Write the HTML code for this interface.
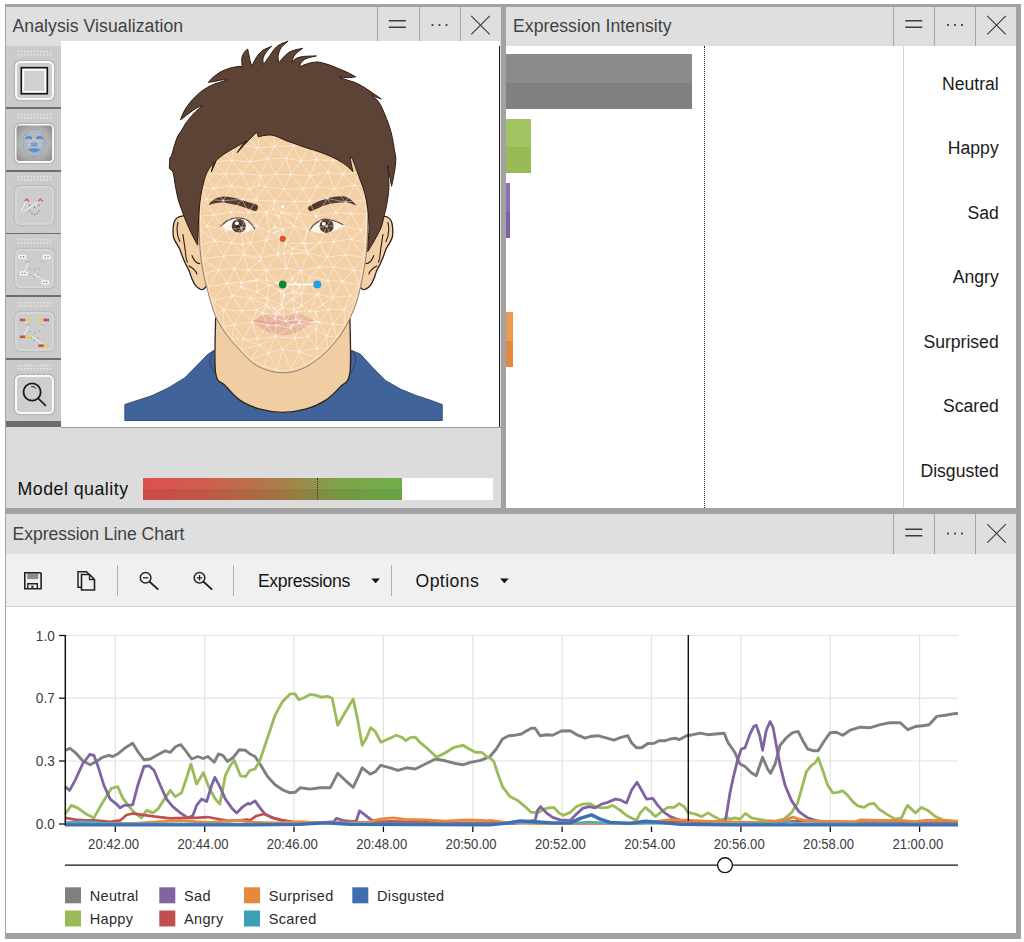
<!DOCTYPE html><html><head><meta charset="utf-8"><title>Expression analysis</title><style>
html,body{margin:0;padding:0;background:#fff;}
body{width:1024px;height:942px;position:relative;overflow:hidden;font-family:"Liberation Sans",sans-serif;color:#1e1e1e;}
.a{position:absolute;}
.t{position:absolute;white-space:nowrap;line-height:1;}
.title{background:#dfdfdf;}
.sep{position:absolute;width:1px;background:#a6a6a6;}
.lab{position:absolute;right:25.3px;white-space:nowrap;font-size:17.6px;line-height:20px;color:#1b1b1b;}
.cell{position:absolute;left:6px;width:55px;height:61px;background:#cbcbcb;}
.grip{position:absolute;width:35.2px;height:6.4px;background-image:radial-gradient(circle,#e6e6e6 0.95px,rgba(230,230,230,0) 1.25px);background-size:3.2px 3.2px;}
.btn{position:absolute;width:35px;height:35px;border:2px solid #f8f8f8;border-radius:5.5px;background:#cecece;box-shadow:0 0 1.5px 0.5px #b0b0b0;}
.btn.dis{border-color:#d6d6d6;background:#cdcdcd;box-shadow:0 0 1px 0.5px #bbb;}
.csep{position:absolute;left:6px;width:55px;height:1.8px;background:#6e6e6e;}
</style></head><body>
<div class="a" style="left:4.5px;top:4px;width:1016.5px;height:935px;background:#a2a2a2;"></div>
<div class="a title" style="left:6px;top:7px;width:495px;height:39px;"></div>
<div class="a" style="left:6px;top:46px;width:495px;height:462px;background:#dcdcdc;"></div>
<div class="t" id="t1" style="left:12.5px;top:18px;font-size:17.6px;letter-spacing:0.08px;color:#424242;">Analysis Visualization</div>
<div class="sep" style="left:377px;top:7px;height:34px;"></div>
<div class="sep" style="left:419px;top:7px;height:34px;"></div>
<div class="sep" style="left:460px;top:7px;height:34px;"></div>
<div class="a title" style="left:506px;top:7px;width:510px;height:39px;"></div>
<div class="a" style="left:506px;top:46px;width:510px;height:462px;background:#fff;"></div>
<div class="t" id="t2" style="left:513px;top:18px;font-size:17.6px;letter-spacing:0.06px;color:#424242;">Expression Intensity</div>
<div class="sep" style="left:893px;top:7px;height:39px;"></div>
<div class="sep" style="left:934px;top:7px;height:39px;"></div>
<div class="sep" style="left:975px;top:7px;height:39px;"></div>
<div class="a title" style="left:6px;top:514px;width:1010px;height:40px;"></div>
<div class="a" style="left:6px;top:554px;width:1010px;height:52px;background:#f0f0f0;"></div>
<div class="a" style="left:6px;top:606px;width:1010px;height:1px;background:#cfcfcf;"></div>
<div class="a" style="left:6px;top:607px;width:1010px;height:326px;background:#fff;"></div>
<div class="t" id="t3" style="left:12.5px;top:525.7px;font-size:17.6px;letter-spacing:-0.06px;color:#424242;">Expression Line Chart</div>
<div class="sep" style="left:893px;top:514px;height:40px;"></div>
<div class="sep" style="left:934px;top:514px;height:40px;"></div>
<div class="sep" style="left:975px;top:514px;height:40px;"></div>
<svg class="a" style="left:0;top:0;" width="1024" height="942" viewBox="0 0 1024 942">
<path d="M388.8 20.8h17M388.8 27.3h17" stroke="#3c3c3c" stroke-width="1.6" fill="none"/><rect x="431.6" y="24.1" width="1.8" height="1.8" fill="#333"/><rect x="438.6" y="24.1" width="1.8" height="1.8" fill="#333"/><rect x="445.6" y="24.1" width="1.8" height="1.8" fill="#333"/><path d="M471.2 15.8l18.5 18.5M489.8 15.8l-18.5 18.5" stroke="#3a3a3a" stroke-width="1.1" fill="none"/>
<path d="M905.3 20.8h17M905.3 27.3h17" stroke="#3c3c3c" stroke-width="1.6" fill="none"/><rect x="947.1" y="24.1" width="1.8" height="1.8" fill="#333"/><rect x="954.1" y="24.1" width="1.8" height="1.8" fill="#333"/><rect x="961.1" y="24.1" width="1.8" height="1.8" fill="#333"/><path d="M987.2 15.8l18.5 18.5M1005.8 15.8l-18.5 18.5" stroke="#3a3a3a" stroke-width="1.1" fill="none"/>
<path d="M905.3 529.3h17M905.3 535.8h17" stroke="#3c3c3c" stroke-width="1.6" fill="none"/><rect x="947.1" y="532.6" width="1.8" height="1.8" fill="#333"/><rect x="954.1" y="532.6" width="1.8" height="1.8" fill="#333"/><rect x="961.1" y="532.6" width="1.8" height="1.8" fill="#333"/><path d="M987.2 524.2l18.5 18.5M1005.8 524.2l-18.5 18.5" stroke="#3a3a3a" stroke-width="1.1" fill="none"/>
</svg>
<div class="a" style="left:6px;top:46.2px;width:55px;height:381px;background:#cbcbcb;"></div>
<div class="grip" style="left:17px;top:49.8px;"></div>
<div class="btn" style="left:15px;top:60.8px;"></div>
<div class="csep" style="top:107.0px;"></div>
<div class="grip" style="left:17px;top:112.5px;"></div>
<div class="btn" style="left:15px;top:123.5px;"></div>
<div class="csep" style="top:169.8px;"></div>
<div class="grip" style="left:17px;top:175.2px;"></div>
<div class="btn dis" style="left:15px;top:186.2px;"></div>
<div class="csep" style="top:232.5px;"></div>
<div class="grip" style="left:17px;top:238.0px;"></div>
<div class="btn dis" style="left:15px;top:249.0px;"></div>
<div class="csep" style="top:295.2px;"></div>
<div class="grip" style="left:17px;top:300.8px;"></div>
<div class="btn dis" style="left:15px;top:311.8px;"></div>
<div class="csep" style="top:358.0px;"></div>
<div class="grip" style="left:17px;top:363.5px;"></div>
<div class="btn" style="left:15px;top:374.5px;"></div>
<div class="a" style="left:6px;top:421.4px;width:55px;height:5.8px;background:#6c6c6c;"></div>
<div class="a" style="left:61px;top:41px;width:439px;height:386px;background:#fff;"></div>
<div class="a" style="left:499px;top:46px;width:1px;height:381px;background:#1a1a1a;"></div>
<div class="a" style="left:61px;top:427px;width:440px;height:1px;background:#9a9a9a;"></div>
<svg class="a" style="left:0;top:0;filter:blur(0.35px);" width="1024" height="942" viewBox="0 0 1024 942">
<defs><clipPath id="fc"><path d="M198.8 216.4 C198.4 209.9 196.9 218.0 197.6 211.4 C198.2 204.7 199.2 186.3 202.6 176.3 C205.9 166.3 210.1 158.3 217.6 151.2 C225.1 144.1 236.4 137.0 247.7 133.7 C258.9 130.4 272.7 130.8 285.3 131.2 C297.8 131.6 312.0 132.4 322.8 136.2 C333.7 140.0 343.7 147.1 350.4 153.7 C357.1 160.4 359.9 166.7 362.9 176.3 C365.9 185.9 367.6 204.7 368.4 211.4 C369.3 218.0 368.2 209.9 367.9 216.4 C367.6 222.8 367.5 240.3 366.7 250.1 C365.8 259.9 364.4 267.2 362.9 275.2 C361.4 283.1 360.0 290.6 357.9 297.7 C355.8 304.8 353.3 311.5 350.4 317.7 C347.5 324.0 344.1 329.8 340.4 335.3 C336.6 340.7 332.4 345.7 327.8 350.3 C323.2 354.9 317.8 359.5 312.8 362.8 C307.8 366.2 302.8 368.7 297.8 370.3 C292.8 372.0 287.8 372.8 282.7 372.8 C277.7 372.8 272.7 372.0 267.7 370.3 C262.7 368.7 257.7 366.6 252.7 362.8 C247.7 359.1 242.2 352.8 237.7 347.8 C233.1 342.8 228.9 338.2 225.1 332.8 C221.4 327.3 217.8 321.5 215.1 315.2 C212.4 309.0 210.7 301.9 208.8 295.2 C207.0 288.5 205.3 282.7 203.8 275.2 C202.4 267.6 200.9 259.9 200.1 250.1 C199.2 240.3 199.2 222.8 198.8 216.4Z"/></clipPath></defs>
<path d="M124.8 420.5 L124.8 404.5 L140.0 399.5 L152.0 395.6 L168.0 388.0 L184.5 378.0 L200.6 361.8 L207.0 355.0 L213.9 350.3 L215.6 372.8 L225.1 385.4 L240.2 400.4 L260.2 409.2 L282.7 412.4 L305.3 409.2 L325.3 400.4 L340.4 386.6 L349.9 372.8 L351.6 350.3 L360.4 354.1 L372.9 367.8 L385.5 380.4 L400.5 389.1 L416.0 395.4 L430.0 400.0 L442.3 404.5 L442.3 420.5Z" fill="#40649a" stroke="#2c3f5e" stroke-width="0.8" stroke-linejoin="round"/>
<path d="M215.6 317.7 C215.6 326.9 214.0 361.6 215.6 372.8 C217.2 384.1 221.0 380.8 225.1 385.4 C229.2 390.0 234.3 396.4 240.2 400.4 C246.0 404.4 253.1 407.2 260.2 409.2 C267.3 411.2 275.2 412.4 282.7 412.4 C290.3 412.4 298.2 411.2 305.3 409.2 C312.4 407.2 319.5 404.2 325.3 400.4 C331.2 396.6 336.3 391.2 340.4 386.6 C344.5 382.0 348.3 384.3 349.9 372.8 C351.5 361.4 349.9 326.9 349.9 317.7" fill="#f1cda3" stroke="#33241a" stroke-width="1.300"/>
<path d="M213.9 350.300C208 358 209 366 215 373" fill="none" stroke="#2c3f5e" stroke-width="0.9"/>
<path d="M351.600 350.300C357.500 358 356.500 366 350.500 373" fill="none" stroke="#2c3f5e" stroke-width="0.9"/>
<path d="M205.0 212.0 C202.0 207.7 193.7 213.3 190.0 214.0 C186.3 214.7 184.7 215.4 182.8 215.9 C180.9 216.4 179.9 216.3 178.6 217.0 C177.3 217.7 175.8 218.6 174.9 220.2 C174.0 221.8 173.6 223.8 173.3 226.5 C173.0 229.2 172.9 233.4 173.3 236.1 C173.7 238.8 174.9 240.3 175.9 242.4 C176.9 244.5 178.5 246.5 179.6 248.8 C180.7 251.1 181.3 253.7 182.3 256.2 C183.3 258.7 184.3 261.2 185.5 263.7 C186.7 266.2 188.1 268.6 189.2 271.1 C190.2 273.6 190.8 276.2 191.8 278.5 C192.8 280.8 193.8 283.2 195.0 284.9 C196.2 286.6 197.9 287.9 199.3 288.6 C200.7 289.3 202.1 290.5 203.5 289.1 C204.9 287.7 207.2 288.2 208.0 280.0 C208.8 271.8 208.5 251.3 208.0 240.0 C207.5 228.7 208.0 216.3 205.0 212.0Z" fill="#f3d0a6" stroke="#2e2016" stroke-width="1.300"/>
<path d="M360.8 212.0 C363.8 207.7 372.1 213.3 375.8 214.0 C379.5 214.7 381.1 215.4 383.0 215.9 C384.9 216.4 385.9 216.3 387.2 217.0 C388.5 217.7 390.0 218.6 390.9 220.2 C391.8 221.8 392.2 223.8 392.5 226.5 C392.8 229.2 392.9 233.4 392.5 236.1 C392.1 238.8 390.9 240.3 389.9 242.4 C388.8 244.5 387.3 246.5 386.2 248.8 C385.1 251.1 384.5 253.7 383.5 256.2 C382.5 258.7 381.4 261.2 380.3 263.7 C379.1 266.2 377.6 268.6 376.6 271.1 C375.5 273.6 375.0 276.2 374.0 278.5 C373.0 280.8 372.0 283.2 370.8 284.9 C369.5 286.6 367.9 287.9 366.5 288.6 C365.1 289.3 363.7 290.5 362.3 289.1 C360.8 287.7 358.5 288.2 357.8 280.0 C357.0 271.8 357.3 251.3 357.8 240.0 C358.3 228.7 357.8 216.3 360.8 212.0Z" fill="#f3d0a6" stroke="#2e2016" stroke-width="1.300"/>
<path d="M182.800 234C184 242 185.500 251 186 257.500C186.500 260 187 261.500 187.600 262.600M191.800 255.200C193.500 260 196.500 263.500 200.300 263.700M188.600 265.800C193 268 196 271 197.100 274.300M178 222C176.500 228 177 236 180 242" fill="none" stroke="#2e2016" stroke-width="1.100"/>
<path d="M383 234C381.800 242 380.300 251 379.800 257.500C379.300 260 378.800 261.500 378.200 262.600M374 255.200C372.300 260 369.300 263.500 365.500 263.700M377.200 265.800C372.800 268 369.800 271 368.700 274.300M387.800 222C389.300 228 388.800 236 385.800 242" fill="none" stroke="#2e2016" stroke-width="1.100"/>
<path d="M198.8 216.4 C198.4 209.9 196.9 218.0 197.6 211.4 C198.2 204.7 199.2 186.3 202.6 176.3 C205.9 166.3 210.1 158.3 217.6 151.2 C225.1 144.1 236.4 137.0 247.7 133.7 C258.9 130.4 272.7 130.8 285.3 131.2 C297.8 131.6 312.0 132.4 322.8 136.2 C333.7 140.0 343.7 147.1 350.4 153.7 C357.1 160.4 359.9 166.7 362.9 176.3 C365.9 185.9 367.6 204.7 368.4 211.4 C369.3 218.0 368.2 209.9 367.9 216.4 C367.6 222.8 367.5 240.3 366.7 250.1 C365.8 259.9 364.4 267.2 362.9 275.2 C361.4 283.1 360.0 290.6 357.9 297.7 C355.8 304.8 353.3 311.5 350.4 317.7 C347.5 324.0 344.1 329.8 340.4 335.3 C336.6 340.7 332.4 345.7 327.8 350.3 C323.2 354.9 317.8 359.5 312.8 362.8 C307.8 366.2 302.8 368.7 297.8 370.3 C292.8 372.0 287.8 372.8 282.7 372.8 C277.7 372.8 272.7 372.0 267.7 370.3 C262.7 368.7 257.7 366.6 252.7 362.8 C247.7 359.1 242.2 352.8 237.7 347.8 C233.1 342.8 228.9 338.2 225.1 332.8 C221.4 327.3 217.8 321.5 215.1 315.2 C212.4 309.0 210.7 301.9 208.8 295.2 C207.0 288.5 205.3 282.7 203.8 275.2 C202.4 267.6 200.9 259.9 200.1 250.1 C199.2 240.3 199.2 222.8 198.8 216.4Z" fill="#f3d0a6" stroke="#8a7460" stroke-width="0.9"/>
<path d="M252.500 320.500C258 318 263 313.500 268 313.800C273 314 278 316.500 282.800 316.500C287.500 316.500 292 314 297.500 313.800C302.500 313.500 308 318 313 320.500C306 328 295 335 282.800 335C270 335 259 328 252.500 320.500Z" fill="#e7b09d" fill-opacity="0.85"/>
<path d="M252.500 320.500C262 322 272 323 282.800 323C293 323 303 322 313 320.500" fill="none" stroke="#d99886" stroke-width="1"/>
<g transform="translate(238.8 226.0)">
<clipPath id="ec238"><path d="M-18.5 0.4 C-17.1 -0.7 -13.3 -4.5 -10.3 -5.9 C-7.3 -7.3 -3.9 -8.2 -0.7 -8.1 C2.5 -8.0 6.1 -7.4 8.9 -5.5 C11.8 -3.6 15.1 1.8 16.4 3.2 C14.7 3.7 9.3 5.7 6.2 6.2 C3.1 6.7 0.8 6.6 -2.0 6.2 C-4.8 5.8 -7.6 5.1 -10.3 4.1 C-13.1 3.1 -17.1 1.0 -18.5 0.4Z"/></clipPath>
<path d="M-18.5 0.4 C-17.1 -0.7 -13.3 -4.5 -10.3 -5.9 C-7.3 -7.3 -3.9 -8.2 -0.7 -8.1 C2.5 -8.0 6.1 -7.4 8.9 -5.5 C11.8 -3.6 15.1 1.8 16.4 3.2 C14.7 3.7 9.3 5.7 6.2 6.2 C3.1 6.7 0.8 6.6 -2.0 6.2 C-4.8 5.8 -7.6 5.1 -10.3 4.1 C-13.1 3.1 -17.1 1.0 -18.5 0.4Z" fill="#fbf7f0"/>
<g clip-path="url(#ec238)"><circle cx="0" cy="0" r="7.100" fill="#5d4034"/><circle cx="0" cy="0.300" r="3.200" fill="#3a251b"/></g>
<circle cx="-2.0" cy="-2.7" r="1.900" fill="#fff"/>
<path d="M-18.5 0.4 C-17.1 -0.7 -13.3 -4.5 -10.3 -5.9 C-7.3 -7.3 -3.9 -8.2 -0.7 -8.1 C2.5 -8.0 6.1 -7.4 8.9 -5.5 C11.8 -3.6 15.1 1.8 16.4 3.2" fill="none" stroke="#6a5346" stroke-width="1.300"/>
</g>
<g transform="translate(326.6 226.0)">
<clipPath id="ec326"><path d="M-17.1 4.8 C-16.3 3.8 -14.7 0.5 -12.3 -1.4 C-9.9 -3.3 -6.1 -6.2 -2.7 -6.8 C0.7 -7.4 4.8 -6.0 8.2 -5.0 C11.6 -4.0 16.2 -1.4 17.8 -0.7 C16.7 -0.0 13.7 2.1 11.0 3.4 C8.3 4.7 4.6 6.2 1.4 6.8 C-1.8 7.4 -5.1 7.1 -8.2 6.8 C-11.3 6.5 -15.6 5.1 -17.1 4.8Z"/></clipPath>
<path d="M-17.1 4.8 C-16.3 3.8 -14.7 0.5 -12.3 -1.4 C-9.9 -3.3 -6.1 -6.2 -2.7 -6.8 C0.7 -7.4 4.8 -6.0 8.2 -5.0 C11.6 -4.0 16.2 -1.4 17.8 -0.7 C16.7 -0.0 13.7 2.1 11.0 3.4 C8.3 4.7 4.6 6.2 1.4 6.8 C-1.8 7.4 -5.1 7.1 -8.2 6.8 C-11.3 6.5 -15.6 5.1 -17.1 4.8Z" fill="#fbf7f0"/>
<g clip-path="url(#ec326)"><circle cx="0" cy="0" r="7.100" fill="#5d4034"/><circle cx="0" cy="0.300" r="3.200" fill="#3a251b"/></g>
<circle cx="-2.7" cy="-2.2" r="1.900" fill="#fff"/>
<path d="M-17.1 4.8 C-16.3 3.8 -14.7 0.5 -12.3 -1.4 C-9.9 -3.3 -6.1 -6.2 -2.7 -6.8 C0.7 -7.4 4.8 -6.0 8.2 -5.0 C11.6 -4.0 16.2 -1.4 17.8 -0.7" fill="none" stroke="#6a5346" stroke-width="1.300"/>
</g>
<path d="M208.6 204.8 C208.6 204.1 212.2 200.4 214.8 199.0 C217.4 197.7 220.7 196.6 224.4 196.6 C228.0 196.5 232.8 197.7 236.7 198.6 C240.6 199.5 244.2 200.9 247.7 202.1 C251.1 203.2 256.2 204.0 257.5 205.5 C258.9 207.0 257.5 210.4 255.9 211.0 C254.2 211.5 250.9 209.6 247.7 208.6 C244.5 207.6 240.6 206.1 236.7 205.1 C232.8 204.1 228.0 203.1 224.4 202.7 C220.7 202.4 217.4 202.8 214.8 203.2 C212.2 203.5 208.6 205.5 208.6 204.8Z" fill="#553a2e"/>
<path d="M308.1 207.5 C308.9 206.1 312.5 204.2 315.6 202.7 C318.7 201.3 322.9 199.7 326.6 198.6 C330.2 197.6 334.1 196.8 337.5 196.6 C341.0 196.3 344.0 195.8 347.1 197.3 C350.2 198.7 355.8 204.2 356.0 205.1 C356.3 206.0 351.6 203.1 348.5 202.7 C345.4 202.4 341.2 202.4 337.5 202.7 C333.9 203.1 330.2 203.7 326.6 204.8 C322.9 205.9 318.3 208.1 315.6 209.2 C312.9 210.3 311.7 211.5 310.4 211.2 C309.2 211.0 307.2 208.9 308.1 207.5Z" fill="#553a2e"/>
<path d="M273 282C276 287 280 288.500 283 288.500C286 288.500 290 287 293 282" fill="none" stroke="#e2b893" stroke-width="1"/>
<g clip-path="url(#fc)"><path d="M250.5 297.9L241.9 310.9M274.0 146.7L286.5 158.0M205.1 273.3L218.2 270.1M285.8 321.3L282.3 307.7M326.7 226.1L343.8 225.5M249.6 189.0L256.1 200.3M326.7 226.1L333.7 241.6M243.5 339.0L257.2 339.0M223.6 327.1L232.0 338.6M233.7 143.6L221.3 150.8M293.3 145.7L300.7 161.2M233.7 143.6L231.8 160.3M343.8 225.5L360.7 230.3M343.8 225.5L351.4 239.1M319.7 242.7L306.9 251.5M223.4 256.1L218.2 270.1M221.3 150.8L212.9 162.0M309.3 284.2L328.2 280.9M329.8 142.4L332.8 160.7M274.9 201.0L273.2 208.7M291.5 369.9L304.9 365.1M223.7 309.6L234.1 325.0M206.0 199.4L223.3 200.6M231.4 242.9L223.4 256.1M275.7 315.0L275.2 318.2M285.7 243.9L302.9 243.0M282.1 349.1L298.8 351.7M304.9 365.1L316.9 357.5M288.5 133.1L293.3 145.7M274.0 146.7L293.3 145.7M243.9 254.8L259.6 261.1M362.0 271.0L354.1 270.2M266.0 304.8L267.8 306.6M232.4 295.7L223.7 309.6M260.3 175.7L265.0 186.8M345.3 255.0L333.2 267.0M273.2 208.7L278.7 215.9M293.3 145.7L309.8 144.1M256.1 200.3L248.6 212.6M309.7 201.3L327.5 198.5M266.7 298.0L257.1 292.1M301.2 293.5L317.8 294.3M266.7 298.0L267.8 306.6M317.0 348.4L315.9 329.2M316.0 321.8L315.9 329.2M328.7 309.2L319.2 321.9M351.4 239.1L345.3 255.0M281.5 304.9L277.4 311.1M327.5 198.5L345.6 202.1M249.6 189.0L259.0 185.1M275.1 336.6L290.7 327.9M299.1 213.6L296.7 218.0M267.4 325.3L275.1 336.6M319.2 267.0L328.2 280.9M359.2 285.0L362.0 271.0M275.7 315.0L262.3 313.1M250.2 161.8L260.3 175.7M230.9 212.1L226.3 230.4M350.5 295.8L344.2 309.5M231.2 185.8L223.3 200.6M267.4 325.3L275.2 318.2M300.0 320.5L296.7 311.7M280.4 291.0L287.3 287.1M316.4 159.8L332.8 160.7M327.2 257.1L333.2 267.0M274.0 146.7L268.2 158.8M326.7 226.1L319.7 242.7M359.2 285.0L342.4 281.3M242.0 173.3L249.6 189.0M316.0 321.8L315.4 311.8M293.3 145.7L286.5 158.0M284.1 296.1L292.9 299.3M292.4 277.8L295.3 282.9M256.8 279.9L257.1 292.1M281.5 304.9L282.3 307.7M274.8 226.7L282.9 229.4M350.9 213.5L343.8 225.5M354.4 185.4L345.6 202.1M260.3 175.7L259.0 185.1M328.2 280.9L310.1 276.8M267.4 325.3L262.3 313.1M342.4 281.3L332.6 297.4M213.9 188.4L206.0 199.4M288.5 133.1L274.0 146.7M295.9 319.5L296.7 311.7M355.8 298.9L359.2 285.0M231.8 160.3L242.0 173.3M309.9 310.8L315.4 311.8M256.5 225.9L269.0 231.7M260.8 257.5L277.9 254.4M309.7 201.3L315.7 216.2M281.5 304.9L280.4 291.0M252.3 321.9L243.5 339.0M302.9 243.0L305.3 243.9M300.7 161.2L316.4 159.8M366.6 214.0L360.7 230.3M274.8 226.7L277.7 231.2M327.7 348.2L326.7 335.9M294.0 309.5L296.7 311.7M267.4 325.3L257.2 339.0M250.2 161.8L242.0 173.3M355.8 298.9L350.5 295.8M278.0 283.0L280.4 291.0M281.6 212.6L299.1 213.6M281.6 212.6L294.2 226.2M256.6 309.8L262.3 313.1M326.7 335.9L319.2 321.9M365.1 199.8L362.9 185.7M327.2 257.1L319.2 267.0M299.1 213.6L315.7 216.2M234.4 268.6L248.5 270.1M299.1 213.6L307.2 230.2M299.2 322.8L300.0 320.5M266.7 298.0L269.0 285.0M362.9 185.7L358.9 172.2M242.0 173.3L231.2 185.8M359.2 285.0L350.5 295.8M290.4 174.5L310.3 176.0M231.4 242.9L242.6 244.5M248.5 270.1L266.3 270.2M328.7 309.2L333.0 323.9M281.5 304.9L292.9 299.3M252.3 321.9L267.4 325.3M309.9 310.8L301.6 305.5M316.9 357.5L298.8 351.7M201.4 244.9L202.9 259.1M310.3 176.0L328.2 172.4M275.1 336.6L259.9 345.0M241.4 227.8L256.5 225.9M241.4 227.8L250.3 242.9M327.7 348.2L317.0 348.4M202.9 259.1L205.1 273.3M276.3 325.6L290.7 327.9M302.7 135.0L288.5 133.1M256.5 225.9L266.2 240.1M291.2 253.7L292.6 248.3M288.5 133.1L274.3 133.4M265.0 186.8L284.3 189.0M250.5 297.9L266.0 304.8M265.0 186.8L274.9 201.0M299.2 322.8L290.7 327.9M227.0 283.1L240.9 282.5M257.2 339.0L275.1 336.6M274.4 233.0L277.7 231.2M231.8 160.3L225.6 174.0M284.3 189.0L302.7 188.9M256.8 279.9L269.0 285.0M277.4 370.4L282.1 349.1M284.3 189.0L294.9 201.6M281.6 212.6L278.7 215.9M275.1 336.6L295.1 338.4M260.8 257.5L266.3 270.2M241.4 349.4L251.5 359.5M366.6 214.0L350.9 213.5M200.3 216.3L214.1 215.0M214.9 240.8L231.4 242.9M200.3 216.3L206.9 226.0M232.0 338.6L243.5 339.0M240.9 282.5L241.1 283.0M205.5 174.3L202.4 188.1M212.2 301.0L223.7 309.6M266.2 240.1L277.9 254.4M302.7 135.0L309.8 144.1M355.8 298.9L344.2 309.5M242.0 199.5L256.1 200.3M250.5 297.9L241.1 287.3M266.7 298.0L274.3 308.4M299.2 322.8L295.9 319.5M202.9 259.1L214.9 240.8M202.9 259.1L223.4 256.1M234.4 268.6L240.9 282.5M294.9 201.6L299.1 213.6M279.8 237.2L277.7 231.2M256.8 279.9L266.8 280.3M212.9 162.0L225.6 174.0M290.4 174.5L302.7 188.9M282.3 307.7L279.5 312.7M358.9 172.2L343.0 174.3M274.8 226.7L274.4 233.0M275.1 336.6L282.1 349.1M358.9 172.2L354.4 185.4M243.9 254.8L248.5 270.1M301.2 293.5L300.0 285.9M352.0 159.7L332.8 160.7M241.4 227.8L231.4 242.9M307.9 336.4L315.9 329.2M317.8 294.3L301.6 305.5M309.3 284.2L304.4 285.3M299.2 322.8L307.9 336.4M317.8 294.3L323.0 304.6M266.3 270.2L266.8 280.3M232.0 338.6L241.4 349.4M260.0 134.4L257.6 147.9M266.3 212.1L256.5 225.9M309.8 144.1L316.4 159.8M265.0 186.8L256.1 200.3M266.7 298.0L281.5 304.9M212.9 162.0L205.5 174.3M274.4 233.0L269.0 231.7M218.2 270.1L227.0 283.1M274.3 308.4L267.8 306.6M277.4 370.4L268.5 352.7M328.2 280.9L342.4 281.3M302.9 243.0L292.6 248.3M360.7 230.3L351.4 239.1M275.5 174.3L284.3 189.0M246.0 136.4L257.6 147.9M292.9 299.3L301.6 305.5M223.3 200.6L242.0 199.5M250.3 242.9L243.9 254.8M292.7 284.5L300.0 285.9M316.9 357.5L327.7 348.2M226.3 230.4L214.9 240.8M266.2 240.1L260.8 257.5M319.7 242.7L333.7 241.6M251.5 359.5L259.9 345.0M274.9 201.0L266.3 212.1M333.2 267.0L342.4 281.3M333.7 241.6L351.4 239.1M315.4 311.8L319.2 321.9M231.8 160.3L250.2 161.8M294.9 201.6L281.6 212.6M208.4 287.2L218.2 270.1M332.6 297.4L350.5 295.8M208.4 287.2L227.0 283.1M246.0 136.4L221.3 150.8M362.0 271.0L364.1 256.8M292.9 299.3L293.7 291.7M240.9 282.5L241.1 287.3M294.0 309.5L295.9 319.5M268.2 158.8L275.5 174.3M214.1 215.0L230.9 212.1M202.4 188.1L213.9 188.4M243.9 254.8L234.4 268.6M291.2 253.7L308.1 253.6M265.0 186.8L259.0 185.1M202.4 188.1L206.0 199.4M269.0 285.0L280.4 291.0M248.5 270.1L259.6 261.1M364.1 256.8L365.4 242.6M286.5 158.0L290.4 174.5M241.9 310.9L252.3 321.9M308.1 253.6L327.2 257.1M299.2 322.8L295.1 338.4M285.8 321.3L276.3 325.6M282.8 291.7L287.3 287.1M364.1 256.8L351.4 239.1M298.8 351.7L317.0 348.4M225.6 174.0L242.0 173.3M315.7 216.2L335.7 212.5M277.9 254.4L283.9 253.6M309.8 144.1L300.7 161.2M315.7 216.2L326.7 226.1M279.8 237.2L274.4 233.0M358.9 172.2L352.0 159.7M335.7 212.5L350.9 213.5M200.3 216.3L200.4 202.2M352.0 159.7L341.9 150.1M317.8 294.3L332.6 297.4M294.0 309.5L282.3 307.7M275.5 174.3L265.0 186.8M294.2 226.2L282.9 229.4M286.5 268.2L300.6 270.9M292.7 284.5L295.3 282.9M223.6 327.1L234.1 325.0M260.8 257.5L259.6 261.1M307.2 230.2L296.7 218.0M279.5 312.7L275.2 318.2M299.2 322.8L316.0 321.8M319.7 242.7L327.2 257.1M208.4 287.2L212.2 301.0M249.6 189.0L242.0 199.5M333.2 267.0L328.2 280.9M294.2 226.2L307.2 230.2M277.9 254.4L279.8 237.2M285.7 243.9L283.9 253.6M343.8 225.5L333.7 241.6M291.5 369.9L298.8 351.7M345.6 202.1L350.9 213.5M221.3 150.8L231.8 160.3M301.2 293.5L296.8 292.9M268.2 158.8L260.3 175.7M287.3 287.1L283.5 294.5M329.8 142.4L316.4 159.8M336.8 337.2L326.7 335.9M310.1 276.8L304.4 285.3M266.3 270.2L286.5 268.2M291.2 253.7L300.6 270.9M206.0 199.4L214.1 215.0M241.9 310.9L234.1 325.0M285.8 321.3L279.5 312.7M260.3 175.7L249.6 189.0M300.6 270.9L310.1 276.8M364.1 256.8L345.3 255.0M315.7 216.2L307.2 230.2M364.1 256.8L354.1 270.2M328.2 172.4L343.0 174.3M344.2 309.5L333.0 323.9M294.0 309.5L292.9 299.3M205.1 273.3L208.4 287.2M327.5 198.5L335.7 212.5M234.1 325.0L243.5 339.0M295.1 338.4L290.7 327.9M274.3 133.4L260.0 134.4M277.9 254.4L286.5 268.2M344.5 325.1L344.2 309.5M274.3 133.4L274.0 146.7M278.0 283.0L287.3 287.1M285.8 321.3L292.1 325.0M251.5 359.5L268.5 352.7M243.9 254.8L242.6 244.5M285.8 321.3L275.2 318.2M200.9 230.6L214.9 240.8M302.7 188.9L317.0 186.7M266.2 240.1L279.8 237.2M302.7 188.9L309.7 201.3M293.7 291.7L287.3 287.1M300.6 270.9L295.3 282.9M319.7 242.7L305.3 243.9M251.5 359.5L263.7 366.7M309.9 310.8L323.0 304.6M291.5 369.9L282.1 349.1M284.1 296.1L293.7 291.7M309.9 310.8L296.7 311.7M275.1 336.6L276.3 325.6M301.2 293.5L292.9 299.3M202.4 188.1L200.4 202.2M309.3 284.2L317.8 294.3M304.9 365.1L298.8 351.7M278.0 283.0L292.4 277.8M275.7 315.0L277.4 311.1M266.3 270.2L278.0 283.0M256.6 309.8L266.0 304.8M285.7 243.9L277.9 254.4M250.5 297.9L266.7 298.0M282.9 229.4L277.7 231.2M336.8 337.2L344.5 325.1M250.3 242.9L242.6 244.5M274.3 308.4L281.5 304.9M292.4 277.8L287.3 287.1M240.9 282.5L256.8 279.9M309.7 201.3L299.1 213.6M319.2 321.9L315.9 329.2M223.4 256.1L243.9 254.8M328.7 309.2L315.4 311.8M365.4 242.6L366.6 214.0M274.8 226.7L269.0 231.7M295.1 338.4L307.9 336.4M327.5 198.5L315.7 216.2M329.8 142.4L309.8 144.1M336.8 337.2L333.0 323.9M223.7 309.6L241.9 310.9M278.0 283.0L269.0 285.0M286.5 268.2L292.4 277.8M277.9 254.4L266.3 270.2M248.6 212.6L266.3 212.1M304.4 285.3L300.0 285.9M295.9 319.5L300.0 320.5M316.4 159.8L328.2 172.4M232.4 295.7L250.5 297.9M200.9 230.6L206.9 226.0M241.4 349.4L243.5 339.0M280.4 291.0L283.5 294.5M291.2 253.7L306.9 251.5M266.2 240.1L274.4 233.0M256.1 200.3L274.9 201.0M365.1 199.8L354.4 185.4M274.3 308.4L275.7 315.0M365.1 199.8L345.6 202.1M284.1 296.1L281.5 304.9M248.5 270.1L256.8 279.9M316.0 321.8L300.0 320.5M256.8 279.9L241.1 283.0M274.8 226.7L278.7 215.9M310.3 176.0L317.0 186.7M216.5 314.6L223.7 309.6M295.1 338.4L298.8 351.7M328.7 309.2L323.0 304.6M250.2 161.8L268.2 158.8M278.0 283.0L266.8 280.3M262.3 313.1L267.8 306.6M205.5 174.3L225.6 174.0M256.5 225.9L250.3 242.9M326.7 335.9L315.9 329.2M316.0 321.8L319.2 321.9M266.7 298.0L266.0 304.8M284.3 189.0L274.9 201.0M233.7 143.6L250.2 161.8M309.9 310.8L300.0 320.5M296.8 292.9L293.7 291.7M365.4 242.6L366.0 228.3M300.7 161.2L310.3 176.0M214.9 240.8L223.4 256.1M269.0 285.0L257.1 292.1M302.7 135.0L293.3 145.7M268.5 352.7L259.9 345.0M231.4 242.9L243.9 254.8M327.7 348.2L336.8 337.2M333.0 323.9L326.7 335.9M282.9 229.4L278.7 215.9M242.0 199.5L248.6 212.6M304.4 285.3L295.3 282.9M250.5 297.9L257.1 292.1M234.4 268.6L227.0 283.1M232.4 295.7L241.9 310.9M202.9 259.1L218.2 270.1M299.2 322.8L315.9 329.2M256.1 200.3L266.3 212.1M290.4 174.5L284.3 189.0M281.6 212.6L273.2 208.7M281.6 212.6L296.7 218.0M275.1 336.6L268.5 352.7M248.5 270.1L240.9 282.5M214.1 215.0L226.3 230.4M302.9 243.0L306.9 251.5M310.3 176.0L302.7 188.9M241.1 287.3L241.1 283.0M352.0 159.7L343.0 174.3M295.1 338.4L282.1 349.1M230.9 212.1L248.6 212.6M301.6 305.5L296.7 311.7M341.9 150.1L332.8 160.7M230.9 212.1L241.4 227.8M286.5 268.2L283.9 253.6M205.5 174.3L213.9 188.4M280.4 291.0L282.8 291.7M354.1 270.2L342.4 281.3M327.2 257.1L345.3 255.0M292.1 325.0L290.7 327.9M266.3 270.2L259.6 261.1M227.0 283.1L232.4 295.7M359.2 285.0L354.1 270.2M242.0 173.3L260.3 175.7M285.7 243.9L282.9 229.4M335.7 212.5L343.8 225.5M328.7 309.2L344.2 309.5M256.8 279.9L241.1 287.3M350.9 213.5L360.7 230.3M223.3 200.6L230.9 212.1M300.7 161.2L290.4 174.5M252.3 321.9L262.3 313.1M341.9 150.1L329.8 142.4M256.1 200.3L259.0 185.1M256.6 309.8L252.3 321.9M268.5 352.7L282.1 349.1M300.6 270.9L319.2 267.0M365.4 242.6L360.7 230.3M365.4 242.6L351.4 239.1M342.4 281.3L350.5 295.8M291.2 253.7L283.9 253.6M213.9 188.4L231.2 185.8M213.9 188.4L223.3 200.6M294.2 226.2L302.9 243.0M292.1 325.0L295.9 319.5M242.0 199.5L230.9 212.1M333.7 241.6L345.3 255.0M212.2 301.0L216.5 314.6M307.2 230.2L326.7 226.1M307.2 230.2L319.7 242.7M366.0 228.3L360.7 230.3M332.6 297.4L344.2 309.5M246.0 136.4L233.7 143.6M252.3 321.9L257.2 339.0M214.1 215.0L206.9 226.0M232.0 338.6L234.1 325.0M212.2 301.0L227.0 283.1M286.5 158.0L275.5 174.3M334.4 189.0L354.4 185.4M276.3 325.6L275.2 318.2M262.3 313.1L275.2 318.2M334.4 189.0L345.6 202.1M200.4 202.2L206.0 199.4M309.3 284.2L310.1 276.8M308.1 253.6L319.2 267.0M200.4 202.2L214.1 215.0M299.2 322.8L292.1 325.0M225.6 174.0L231.2 185.8M285.7 243.9L279.8 237.2M266.7 298.0L280.4 291.0M212.9 162.0L231.8 160.3M335.7 212.5L326.7 226.1M257.2 339.0L259.9 345.0M328.2 280.9L332.6 297.4M316.9 357.5L317.0 348.4M282.3 307.7L277.4 311.1M223.3 200.6L214.1 215.0M343.0 174.3L354.4 185.4M319.7 242.7L308.1 253.6M319.2 267.0L310.1 276.8M260.0 134.4L246.0 136.4M257.6 147.9L268.2 158.8M294.2 226.2L285.7 243.9M333.7 241.6L327.2 257.1M241.4 227.8L242.6 244.5M243.5 339.0L259.9 345.0M317.0 186.7L334.4 189.0M300.0 285.9L295.3 282.9M317.0 186.7L327.5 198.5M307.2 230.2L302.9 243.0M345.6 202.1L335.7 212.5M263.7 366.7L277.4 370.4M332.6 297.4L328.7 309.2M250.3 242.9L266.2 240.1M294.0 309.5L301.6 305.5M266.3 212.1L269.0 231.7M301.2 293.5L304.4 285.3M307.2 230.2L305.3 243.9M291.2 253.7L286.5 268.2M277.4 370.4L291.5 369.9M262.3 313.1L266.0 304.8M292.7 284.5L287.3 287.1M212.2 301.0L232.4 295.7M334.4 189.0L327.5 198.5M332.8 160.7L343.0 174.3M201.4 244.9L214.9 240.8M308.1 253.6L300.6 270.9M257.6 147.9L274.0 146.7M274.9 201.0L294.9 201.6M225.6 174.0L213.9 188.4M282.8 291.7L283.5 294.5M344.5 325.1L350.8 312.3M309.9 310.8L316.0 321.8M294.9 201.6L309.7 201.3M266.2 240.1L269.0 231.7M315.4 311.8L323.0 304.6M328.2 172.4L334.4 189.0M292.9 299.3L296.8 292.9M307.9 336.4L317.0 348.4M350.8 312.3L355.8 298.9M268.2 158.8L286.5 158.0M328.2 280.9L317.8 294.3M292.9 299.3L282.3 307.7M284.1 296.1L283.5 294.5M317.8 294.3L309.9 310.8M241.1 287.3L257.1 292.1M243.9 254.8L260.8 257.5M292.7 284.5L292.4 277.8M266.3 212.1L278.7 215.9M294.2 226.2L278.7 215.9M301.2 293.5L301.6 305.5M286.5 268.2L278.0 283.0M286.5 158.0L300.7 161.2M292.6 248.3L306.9 251.5M275.7 315.0L267.8 306.6M248.6 212.6L256.5 225.9M241.9 310.9L256.6 309.8M343.0 174.3L334.4 189.0M326.7 335.9L317.0 348.4M366.0 228.3L366.6 214.0M279.5 312.7L277.4 311.1M257.6 147.9L250.2 161.8M350.8 312.3L344.2 309.5M260.0 134.4L274.0 146.7M266.3 212.1L274.8 226.7M302.7 188.9L294.9 201.6M266.8 280.3L269.0 285.0M263.7 366.7L268.5 352.7M366.6 214.0L365.1 199.8M285.7 243.9L292.6 248.3M232.4 295.7L241.1 287.3M365.1 199.8L350.9 213.5M218.2 270.1L234.4 268.6M279.8 237.2L282.9 229.4M317.0 186.7L309.7 201.3M275.5 174.3L290.4 174.5M309.3 284.2L301.2 293.5M234.1 325.0L252.3 321.9M250.3 242.9L260.8 257.5M200.9 230.6L201.4 244.9M266.3 270.2L256.8 279.9M226.3 230.4L241.4 227.8M226.3 230.4L231.4 242.9M332.8 160.7L328.2 172.4M250.5 297.9L256.6 309.8M285.8 321.3L290.7 327.9M333.2 267.0L354.1 270.2M274.9 201.0L281.6 212.6M227.0 283.1L241.1 287.3M328.2 172.4L317.0 186.7M223.4 256.1L234.4 268.6M274.3 308.4L277.4 311.1M307.9 336.4L298.8 351.7M305.3 243.9L306.9 251.5M281.5 304.9L283.5 294.5M332.6 297.4L323.0 304.6M292.7 284.5L293.7 291.7M267.4 325.3L276.3 325.6M316.9 136.9L309.8 144.1M248.6 212.6L241.4 227.8M344.5 325.1L333.0 323.9M283.9 253.6L292.6 248.3M316.4 159.8L310.3 176.0M260.3 175.7L275.5 174.3M300.6 270.9L292.4 277.8M285.8 321.3L295.9 319.5M333.0 323.9L319.2 321.9M300.6 270.9L304.4 285.3M345.3 255.0L354.1 270.2M293.7 291.7L300.0 285.9M200.3 216.3L200.9 230.6M241.4 349.4L259.9 345.0M233.7 143.6L257.6 147.9M293.7 291.7L283.5 294.5M206.9 226.0L226.3 230.4M308.1 253.6L306.9 251.5M294.0 309.5L285.8 321.3M206.9 226.0L214.9 240.8M362.9 185.7L354.4 185.4M329.8 142.4L316.9 136.9M296.8 292.9L300.0 285.9M319.2 267.0L333.2 267.0M266.3 212.1L273.2 208.7M294.2 226.2L296.7 218.0M316.9 136.9L302.7 135.0M275.7 315.0L279.5 312.7M231.2 185.8L249.6 189.0M223.6 327.1L223.7 309.6M231.2 185.8L242.0 199.5M216.5 314.6L223.6 327.1" fill="none" stroke="#fff" stroke-opacity="0.44" stroke-width="1"/>
<g fill="#fff" fill-opacity="0.4"><circle cx="257.6" cy="147.9" r="1.3"/><circle cx="274.0" cy="146.7" r="1.3"/><circle cx="293.3" cy="145.7" r="1.3"/><circle cx="309.8" cy="144.1" r="1.3"/><circle cx="231.8" cy="160.3" r="1.3"/><circle cx="250.2" cy="161.8" r="1.3"/><circle cx="268.2" cy="158.8" r="1.3"/><circle cx="286.5" cy="158.0" r="1.3"/><circle cx="300.7" cy="161.2" r="1.3"/><circle cx="316.4" cy="159.8" r="1.3"/><circle cx="332.8" cy="160.7" r="1.3"/><circle cx="225.6" cy="174.0" r="1.3"/><circle cx="242.0" cy="173.3" r="1.3"/><circle cx="260.3" cy="175.7" r="1.3"/><circle cx="275.5" cy="174.3" r="1.3"/><circle cx="290.4" cy="174.5" r="1.3"/><circle cx="310.3" cy="176.0" r="1.3"/><circle cx="328.2" cy="172.4" r="1.3"/><circle cx="343.0" cy="174.3" r="1.3"/><circle cx="213.9" cy="188.4" r="1.3"/><circle cx="231.2" cy="185.8" r="1.3"/><circle cx="249.6" cy="189.0" r="1.3"/><circle cx="265.0" cy="186.8" r="1.3"/><circle cx="284.3" cy="189.0" r="1.3"/><circle cx="302.7" cy="188.9" r="1.3"/><circle cx="317.0" cy="186.7" r="1.3"/><circle cx="334.4" cy="189.0" r="1.3"/><circle cx="354.4" cy="185.4" r="1.3"/><circle cx="206.0" cy="199.4" r="1.3"/><circle cx="223.3" cy="200.6" r="1.3"/><circle cx="242.0" cy="199.5" r="1.3"/><circle cx="256.1" cy="200.3" r="1.3"/><circle cx="274.9" cy="201.0" r="1.3"/><circle cx="294.9" cy="201.6" r="1.3"/><circle cx="309.7" cy="201.3" r="1.3"/><circle cx="327.5" cy="198.5" r="1.3"/><circle cx="345.6" cy="202.1" r="1.3"/><circle cx="214.1" cy="215.0" r="1.3"/><circle cx="230.9" cy="212.1" r="1.3"/><circle cx="248.6" cy="212.6" r="1.3"/><circle cx="266.3" cy="212.1" r="1.3"/><circle cx="281.6" cy="212.6" r="1.3"/><circle cx="299.1" cy="213.6" r="1.3"/><circle cx="315.7" cy="216.2" r="1.3"/><circle cx="335.7" cy="212.5" r="1.3"/><circle cx="350.9" cy="213.5" r="1.3"/><circle cx="206.9" cy="226.0" r="1.3"/><circle cx="226.3" cy="230.4" r="1.3"/><circle cx="241.4" cy="227.8" r="1.3"/><circle cx="256.5" cy="225.9" r="1.3"/><circle cx="274.8" cy="226.7" r="1.3"/><circle cx="294.2" cy="226.2" r="1.3"/><circle cx="307.2" cy="230.2" r="1.3"/><circle cx="326.7" cy="226.1" r="1.3"/><circle cx="343.8" cy="225.5" r="1.3"/><circle cx="360.7" cy="230.3" r="1.3"/><circle cx="214.9" cy="240.8" r="1.3"/><circle cx="231.4" cy="242.9" r="1.3"/><circle cx="250.3" cy="242.9" r="1.3"/><circle cx="266.2" cy="240.1" r="1.3"/><circle cx="285.7" cy="243.9" r="1.3"/><circle cx="302.9" cy="243.0" r="1.3"/><circle cx="319.7" cy="242.7" r="1.3"/><circle cx="333.7" cy="241.6" r="1.3"/><circle cx="351.4" cy="239.1" r="1.3"/><circle cx="223.4" cy="256.1" r="1.3"/><circle cx="243.9" cy="254.8" r="1.3"/><circle cx="260.8" cy="257.5" r="1.3"/><circle cx="277.9" cy="254.4" r="1.3"/><circle cx="291.2" cy="253.7" r="1.3"/><circle cx="308.1" cy="253.6" r="1.3"/><circle cx="327.2" cy="257.1" r="1.3"/><circle cx="345.3" cy="255.0" r="1.3"/><circle cx="218.2" cy="270.1" r="1.3"/><circle cx="234.4" cy="268.6" r="1.3"/><circle cx="248.5" cy="270.1" r="1.3"/><circle cx="266.3" cy="270.2" r="1.3"/><circle cx="286.5" cy="268.2" r="1.3"/><circle cx="300.6" cy="270.9" r="1.3"/><circle cx="319.2" cy="267.0" r="1.3"/><circle cx="333.2" cy="267.0" r="1.3"/><circle cx="354.1" cy="270.2" r="1.3"/><circle cx="227.0" cy="283.1" r="1.3"/><circle cx="240.9" cy="282.5" r="1.3"/><circle cx="256.8" cy="279.9" r="1.3"/><circle cx="278.0" cy="283.0" r="1.3"/><circle cx="292.7" cy="284.5" r="1.3"/><circle cx="309.3" cy="284.2" r="1.3"/><circle cx="328.2" cy="280.9" r="1.3"/><circle cx="342.4" cy="281.3" r="1.3"/><circle cx="232.4" cy="295.7" r="1.3"/><circle cx="250.5" cy="297.9" r="1.3"/><circle cx="266.7" cy="298.0" r="1.3"/><circle cx="284.1" cy="296.1" r="1.3"/><circle cx="301.2" cy="293.5" r="1.3"/><circle cx="317.8" cy="294.3" r="1.3"/><circle cx="332.6" cy="297.4" r="1.3"/><circle cx="350.5" cy="295.8" r="1.3"/><circle cx="223.7" cy="309.6" r="1.3"/><circle cx="241.9" cy="310.9" r="1.3"/><circle cx="256.6" cy="309.8" r="1.3"/><circle cx="274.3" cy="308.4" r="1.3"/><circle cx="294.0" cy="309.5" r="1.3"/><circle cx="309.9" cy="310.8" r="1.3"/><circle cx="328.7" cy="309.2" r="1.3"/><circle cx="344.2" cy="309.5" r="1.3"/><circle cx="234.1" cy="325.0" r="1.3"/><circle cx="252.3" cy="321.9" r="1.3"/><circle cx="267.4" cy="325.3" r="1.3"/><circle cx="285.8" cy="321.3" r="1.3"/><circle cx="299.2" cy="322.8" r="1.3"/><circle cx="316.0" cy="321.8" r="1.3"/><circle cx="333.0" cy="323.9" r="1.3"/><circle cx="243.5" cy="339.0" r="1.3"/><circle cx="257.2" cy="339.0" r="1.3"/><circle cx="275.1" cy="336.6" r="1.3"/><circle cx="295.1" cy="338.4" r="1.3"/><circle cx="307.9" cy="336.4" r="1.3"/><circle cx="326.7" cy="335.9" r="1.3"/><circle cx="268.5" cy="352.7" r="1.3"/><circle cx="282.1" cy="349.1" r="1.3"/><circle cx="298.8" cy="351.7" r="1.3"/><circle cx="317.0" cy="348.4" r="1.3"/><circle cx="281.5" cy="304.9" r="1.3"/><circle cx="266.8" cy="280.3" r="1.3"/><circle cx="292.9" cy="299.3" r="1.3"/><circle cx="296.8" cy="292.9" r="1.3"/><circle cx="275.7" cy="315.0" r="1.3"/><circle cx="283.9" cy="253.6" r="1.3"/><circle cx="269.0" cy="285.0" r="1.3"/><circle cx="280.4" cy="291.0" r="1.3"/><circle cx="282.8" cy="291.7" r="1.3"/><circle cx="279.8" cy="237.2" r="1.3"/><circle cx="292.1" cy="325.0" r="1.3"/><circle cx="292.4" cy="277.8" r="1.3"/><circle cx="292.6" cy="248.3" r="1.3"/><circle cx="241.1" cy="287.3" r="1.3"/><circle cx="262.3" cy="313.1" r="1.3"/><circle cx="259.0" cy="185.1" r="1.3"/><circle cx="259.9" cy="345.0" r="1.3"/><circle cx="274.4" cy="233.0" r="1.3"/><circle cx="266.0" cy="304.8" r="1.3"/><circle cx="293.7" cy="291.7" r="1.3"/><circle cx="315.4" cy="311.8" r="1.3"/><circle cx="282.3" cy="307.7" r="1.3"/><circle cx="319.2" cy="321.9" r="1.3"/><circle cx="305.3" cy="243.9" r="1.3"/><circle cx="279.5" cy="312.7" r="1.3"/><circle cx="276.3" cy="325.6" r="1.3"/><circle cx="295.9" cy="319.5" r="1.3"/><circle cx="310.1" cy="276.8" r="1.3"/><circle cx="275.2" cy="318.2" r="1.3"/><circle cx="304.4" cy="285.3" r="1.3"/><circle cx="257.1" cy="292.1" r="1.3"/><circle cx="290.7" cy="327.9" r="1.3"/><circle cx="300.0" cy="285.9" r="1.3"/><circle cx="301.6" cy="305.5" r="1.3"/><circle cx="287.3" cy="287.1" r="1.3"/><circle cx="277.4" cy="311.1" r="1.3"/><circle cx="259.6" cy="261.1" r="1.3"/><circle cx="282.9" cy="229.4" r="1.3"/><circle cx="273.2" cy="208.7" r="1.3"/><circle cx="267.8" cy="306.6" r="1.3"/><circle cx="295.3" cy="282.9" r="1.3"/><circle cx="277.7" cy="231.2" r="1.3"/><circle cx="323.0" cy="304.6" r="1.3"/><circle cx="306.9" cy="251.5" r="1.3"/><circle cx="278.7" cy="215.9" r="1.3"/><circle cx="300.0" cy="320.5" r="1.3"/><circle cx="241.1" cy="283.0" r="1.3"/><circle cx="296.7" cy="218.0" r="1.3"/><circle cx="242.6" cy="244.5" r="1.3"/><circle cx="269.0" cy="231.7" r="1.3"/><circle cx="283.5" cy="294.5" r="1.3"/><circle cx="296.7" cy="311.7" r="1.3"/><circle cx="315.9" cy="329.2" r="1.3"/></g></g>
<path d="M197.7 245.2 C196.6 243.3 193.4 237.6 191.5 233.6 C189.6 229.6 187.6 225.1 186.0 221.2 C184.4 217.4 183.3 214.2 181.9 210.3 C180.5 206.4 178.9 202.3 177.8 197.9 C176.7 193.6 175.9 188.5 175.1 184.2 C174.3 180.0 174.0 175.3 173.0 172.6 C172.1 170.0 169.9 169.1 169.3 168.4 C169.4 166.7 169.5 160.4 169.9 158.2 C170.3 156.0 170.9 157.3 171.6 155.2 C172.4 153.1 173.4 148.8 174.4 145.6 C175.4 142.4 176.6 138.6 177.8 136.0 C179.1 133.4 180.7 131.9 181.9 130.0 C183.1 128.1 183.7 126.5 184.9 124.6 C186.1 122.7 187.6 120.8 189.3 118.7 C191.0 116.6 193.3 114.0 195.3 112.0 C197.3 110.0 200.0 107.8 201.2 106.7 C202.4 105.6 202.4 105.7 202.7 105.5 C201.6 106.0 198.3 106.9 196.0 108.3 C193.7 109.7 191.2 111.8 188.6 113.7 C186.0 115.6 181.8 118.8 180.4 119.8 C181.0 118.4 182.4 114.3 184.1 111.3 C185.8 108.3 188.2 104.7 190.8 101.6 C193.4 98.5 197.0 95.0 199.7 92.7 C202.4 90.4 204.7 89.1 207.2 87.6 C209.7 86.1 212.1 84.9 214.6 83.9 C217.1 82.9 219.9 82.3 222.0 81.7 C224.1 81.1 226.2 80.4 227.1 80.1 C226.2 80.1 224.1 79.7 222.0 79.9 C219.9 80.1 216.9 81.0 214.6 81.4 C212.3 81.8 209.4 82.2 208.3 82.4 C209.1 81.5 211.1 78.9 213.1 77.2 C215.1 75.5 217.8 73.5 220.5 72.0 C223.2 70.5 226.2 69.2 229.4 68.3 C232.7 67.3 237.9 66.5 240.0 66.3 C242.1 66.1 241.8 67.1 242.2 67.2 C242.1 65.7 241.6 60.4 241.9 57.9 C242.3 55.5 243.3 53.9 244.2 52.4 C245.2 51.0 247.1 49.6 247.7 49.0 C247.9 50.0 248.6 53.0 249.0 55.2 C249.5 57.3 249.9 60.3 250.4 62.0 C250.9 63.7 251.8 64.9 252.1 65.5 C252.5 64.7 253.5 62.4 254.5 60.7 C255.5 58.9 256.6 56.9 257.9 55.2 C259.3 53.5 260.5 51.9 262.7 50.4 C265.0 48.9 270.2 47.0 271.6 46.3 C270.7 47.3 267.6 50.1 266.2 52.2 C264.7 54.2 263.5 56.5 263.0 58.6 C262.6 60.7 263.4 63.5 263.4 64.5 C264.2 63.4 266.3 60.6 268.2 57.9 C270.2 55.2 273.0 50.6 275.1 48.3 C277.1 46.0 278.4 45.4 280.5 44.2 C282.7 43.0 286.8 41.7 288.1 41.2 C286.9 42.3 282.9 45.2 281.2 47.6 C279.6 50.1 278.5 53.4 278.1 55.9 C277.7 58.4 278.8 61.6 278.9 62.7 C280.0 61.5 283.2 57.2 285.5 55.2 C287.7 53.2 289.5 51.9 292.3 50.8 C295.2 49.7 300.9 48.7 302.6 48.3 C301.5 49.2 297.4 52.1 295.8 53.8 C294.2 55.5 293.6 57.2 293.0 58.6 C292.4 60.0 292.2 61.7 292.1 62.3 C292.7 61.7 293.9 59.6 295.8 58.6 C297.6 57.6 299.9 57.0 303.3 56.5 C306.7 56.1 314.1 56.0 316.3 55.9 C314.6 56.3 308.5 57.5 306.0 58.6 C303.5 59.7 302.3 61.3 301.2 62.7 C300.1 64.1 299.7 66.1 299.5 66.8 C300.8 66.3 304.5 64.5 307.4 63.7 C310.3 62.9 313.8 62.0 317.0 62.0 C320.2 62.1 323.2 63.1 326.6 64.1 C330.0 65.1 334.1 66.8 337.5 68.2 C341.0 69.6 344.1 70.9 347.1 72.3 C350.1 73.7 354.2 76.1 355.6 76.8 C354.4 77.0 351.2 77.6 348.5 77.6 C345.8 77.7 340.7 77.2 339.2 77.1 C340.3 77.5 342.8 78.5 345.8 79.6 C348.7 80.6 353.3 81.7 356.7 83.3 C360.1 84.8 363.1 86.8 366.3 88.7 C369.5 90.7 373.4 93.5 375.9 95.2 C378.4 96.9 380.5 98.4 381.4 99.0 C380.5 98.7 377.5 97.7 375.9 97.0 C374.2 96.2 372.2 95.0 371.5 94.6 C372.7 95.8 376.5 98.7 378.6 101.8 C380.7 104.8 382.4 108.8 384.1 112.7 C385.8 116.6 387.5 120.9 388.9 125.0 C390.3 129.2 391.4 133.3 392.3 137.4 C393.2 141.5 393.8 146.2 394.4 149.7 C395.0 153.2 395.6 155.2 395.8 158.2 C395.9 161.2 395.5 164.6 395.1 167.8 C394.7 171.0 394.0 174.3 393.4 177.4 C392.9 180.5 391.9 184.8 391.6 186.3 C391.3 184.6 390.3 179.6 389.6 176.0 C388.9 172.5 387.9 166.9 387.5 165.1 C387.8 168.3 388.8 179.2 388.9 184.2 C389.0 189.3 388.7 191.3 388.2 195.2 C387.8 199.1 386.8 204.1 386.2 207.5 C385.5 211.0 384.9 212.6 384.1 215.8 C383.3 218.9 382.7 223.1 381.4 226.7 C380.0 230.4 377.7 234.2 375.9 237.7 C374.1 241.1 371.8 244.9 370.4 247.3 C369.0 249.6 368.1 250.9 367.7 251.6 C367.8 249.5 368.1 243.4 368.4 239.0 C368.6 234.7 369.2 230.4 369.0 225.3 C368.9 220.3 368.4 214.2 367.7 208.9 C367.0 203.7 366.1 198.4 364.9 193.8 C363.8 189.3 362.2 185.4 360.8 181.5 C359.5 177.6 358.1 174.2 356.7 170.5 C355.3 166.9 353.7 162.0 352.6 159.6 C351.5 157.2 350.5 156.7 350.1 156.2 C350.3 157.4 350.8 161.1 351.2 163.7 C351.7 166.3 352.7 170.3 353.0 171.6 C351.8 170.5 348.8 167.2 345.8 165.0 C342.8 162.8 339.1 160.6 335.0 158.5 C330.9 156.4 325.7 154.2 321.0 152.5 C316.3 150.8 311.0 149.3 307.0 148.0 C303.0 146.7 300.3 145.7 297.0 144.5 C293.7 143.3 290.2 142.2 287.0 141.0 C283.8 139.8 280.7 138.0 278.0 137.0 C275.3 136.0 273.3 135.2 271.0 135.0 C268.7 134.8 266.1 135.2 264.0 135.5 C261.9 135.8 259.4 136.8 258.5 137.0 L256.7 132.2 C254.9 134.0 249.2 139.6 246.0 143.0 C242.8 146.4 238.7 151.1 237.2 152.7 C238.2 151.2 241.4 145.9 243.0 144.0 C244.6 142.1 247.7 140.7 246.5 141.2 C245.3 141.7 239.6 144.9 236.0 147.0 C232.4 149.1 228.2 151.3 225.0 153.5 C221.8 155.7 217.9 158.9 216.5 160.0 L211.4 171.8 L213.5 162.5 C212.5 164.0 209.3 167.9 207.6 171.3 C205.9 174.7 204.7 178.2 203.5 183.0 C202.3 187.8 201.0 193.8 200.2 200.0 C199.4 206.2 199.0 214.0 198.6 220.0 C198.2 226.0 198.2 231.8 198.0 236.0 C197.8 240.2 197.7 243.7 197.7 245.2Z" fill="#5d4236" stroke="#2a1a12" stroke-width="1" stroke-linejoin="round"/>
<path d="M282.700 284.400H317.300" stroke="#fff" stroke-width="1.200"/>
<circle cx="282.700" cy="238.800" r="3.100" fill="#e2521f"/>
<circle cx="282.700" cy="284.400" r="3.900" fill="#0b8c3c"/>
<circle cx="317.300" cy="284.400" r="3.900" fill="#1e9fe9"/>
<circle cx="282.700" cy="206.500" r="1.600" fill="#fff"/>
</svg>
<svg class="a" style="left:0;top:0;" width="1024" height="942" viewBox="0 0 1024 942">
<defs><radialGradient id="rg2" cx="50%" cy="50%" r="70%"><stop offset="0" stop-color="#c9c9c9"/><stop offset="0.55" stop-color="#b4b4b4"/><stop offset="1" stop-color="#8a8a8a"/></radialGradient></defs>
<!-- btn1: square -->
<rect x="23" y="69.400" width="22.600" height="22.600" fill="#d0d0d0" stroke="#fff" stroke-width="2.400"/>
<rect x="21.300" y="67.700" width="26" height="26" fill="none" stroke="#161616" stroke-width="1.700"/>
<!-- btn2: pressed w/ blue face -->
<rect x="16.500" y="125.500" width="35.600" height="35.600" rx="3" fill="url(#rg2)"/>
<g fill="none" stroke="#4a8fd8" stroke-width="0.8">
<ellipse cx="34.200" cy="143" rx="11.500" ry="14" stroke-opacity="0.45"/>
<path d="M24 140c2 8 5 14 10.200 16.500c5.200 -2.500 8.200 -8.500 10.200 -16.500" stroke-opacity="0.3"/>
<path d="M34.200 130v26M26 134l16.500 17M42.500 134l-16.500 17M23 143h22.500M25 136h18.500M26 150h16.500" stroke-opacity="0.22"/>
</g>
<g fill="#3b86d9">
<path d="M25 138.200c1.500 -2.600 5.500 -3 7.300 -0.600l-0.300 2c-2.200 -1 -4.800 -1 -7 -0.200z" opacity="0.85"/>
<path d="M43.400 138.200c-1.500 -2.600 -5.500 -3 -7.300 -0.600l0.300 2c2.200 -1 4.800 -1 7 -0.200z" opacity="0.85"/>
<path d="M31.500 142.500h5.500l0.800 4.200h-7.100z" opacity="0.45"/>
<rect x="31" y="143" width="1.500" height="1.500" opacity="0.7"/><rect x="35.800" y="143" width="1.500" height="1.500" opacity="0.7"/><rect x="33.400" y="145.200" width="1.500" height="1.500" opacity="0.7"/>
<path d="M28.500 149.200c2 -1.200 9.500 -1.200 11.500 0c-1.500 2.300 -3.300 3.200 -5.700 3.200s-4.300 -0.900 -5.800 -3.200z" opacity="0.8"/>
</g>
<!-- btn3 -->
<g fill="none" stroke="#f4f4f4" stroke-width="1"><path d="M21 211.500l5.500 -11M23 212l15 -10"/></g>
<g fill="none" stroke="#d0607a" stroke-width="1.500"><path d="M24.800 201.300l2 -2.300l2.300 2.300M38.300 201.300l2 -2.300l2.300 2.300"/></g>
<g fill="#555"><rect x="29" y="204.800" width="1" height="1"/><rect x="34" y="206.800" width="1" height="1"/><rect x="38.500" y="204.800" width="1" height="1"/><rect x="29.500" y="210.500" width="1" height="1"/><rect x="31.500" y="213" width="1" height="1"/><rect x="34" y="214.300" width="1" height="1"/><rect x="36.500" y="213" width="1" height="1"/><rect x="38.500" y="210.500" width="1" height="1"/></g>
<!-- btn4 -->
<g fill="none" stroke="#f2f2f2" stroke-width="1"><path d="M25 258.500l4 3.500M24 272l4.500 -9M45 281l-11 -7M44 258.500l-4 3.500"/></g>
<g fill="none" stroke="#9a9a9a" stroke-width="0.9"><path d="M26 262.500l1.800 -1.800l2 1.800M40 262.500l1.800 -1.800l2 1.800"/></g>
<g fill="#f4f4f4"><rect x="18.300" y="254.800" width="8" height="4.200" rx="1.200"/><rect x="42.700" y="254.800" width="8" height="4.200" rx="1.200"/><rect x="19.600" y="271.200" width="8" height="4.200" rx="1.200"/><rect x="41.300" y="280.300" width="8" height="4.200" rx="1.200"/></g>
<g fill="#666"><rect x="20.300" y="256.300" width="1.200" height="1.200"/><rect x="23" y="256.300" width="1.200" height="1.200"/><rect x="44.700" y="256.300" width="1.200" height="1.200"/><rect x="47.400" y="256.300" width="1.200" height="1.200"/><rect x="21.600" y="272.700" width="1.200" height="1.200"/><rect x="24.300" y="272.700" width="1.200" height="1.200"/><rect x="43.300" y="281.800" width="1.200" height="1.200"/><rect x="46" y="281.800" width="1.200" height="1.200"/>
<rect x="29.500" y="268.500" width="1" height="1" opacity="0.7"/><rect x="34" y="269.500" width="1" height="1" opacity="0.7"/><rect x="38.500" y="268.500" width="1" height="1" opacity="0.7"/><rect x="30" y="274.200" width="1" height="1" opacity="0.7"/><rect x="33.700" y="276.300" width="1" height="1" opacity="0.7"/><rect x="37.800" y="274.200" width="1" height="1" opacity="0.7"/></g>
<!-- btn5 -->
<g fill="none" stroke="#f2f2f2" stroke-width="1"><path d="M25 322l4 3.500M24 335l4.500 -9M43 344l-11 -7.500M44 322l-4 3.500"/></g>
<g fill="none" stroke="#9a9a9a" stroke-width="0.9"><path d="M26 325.500l1.800 -1.800l2 1.800M40 325.500l1.800 -1.800l2 1.800"/></g>
<g><rect x="19.800" y="318.700" width="5.500" height="2.600" fill="#c4504e"/><rect x="25.300" y="318.700" width="5.200" height="2.600" fill="#e2d447"/>
<rect x="38.300" y="318.700" width="5.200" height="2.600" fill="#e2d447"/><rect x="43.500" y="318.700" width="5.500" height="2.600" fill="#c4504e"/>
<rect x="19.800" y="335.500" width="5.500" height="2.600" fill="#c4504e"/><rect x="25.300" y="335.500" width="5.200" height="2.600" fill="#e2d447"/>
<rect x="38.300" y="344.400" width="5.500" height="2.600" fill="#c4504e"/><rect x="43.800" y="344.400" width="5.200" height="2.600" fill="#e2d447"/></g>
<g fill="#666"><rect x="29.500" y="331" width="1" height="1" opacity="0.7"/><rect x="34" y="332.500" width="1" height="1" opacity="0.7"/><rect x="38.500" y="331" width="1" height="1" opacity="0.7"/><rect x="30.500" y="337.500" width="1" height="1" opacity="0.7"/><rect x="34" y="340" width="1" height="1" opacity="0.7"/><rect x="37.500" y="337.500" width="1" height="1" opacity="0.7"/></g>
<!-- btn6: magnifier -->
<circle cx="32.100" cy="392" r="8.600" fill="none" stroke="#1a1a1a" stroke-width="1.800"/>
<path d="M38.300 398.500L45.400 405.400" stroke="#1a1a1a" stroke-width="1.700" stroke-linecap="round"/>
<path d="M31.300 386.500c2.200 0 3.700 0.800 4.500 2" fill="none" stroke="#1a1a1a" stroke-width="1"/>
</svg>

<div class="t" id="mq" style="left:17.5px;top:481.1px;font-size:17.8px;letter-spacing:0.48px;color:#111;">Model quality</div>
<div class="a" style="left:143px;top:478px;width:350px;height:22px;background:#fff;"></div>
<div class="a" style="left:143px;top:478px;width:259px;height:22px;background:linear-gradient(90deg,#dc5050 0%,#cf5f4c 25%,#a88048 55%,#7fa24a 75%,#6fb04a 100%);"></div>
<div class="a" style="left:143px;top:489px;width:259px;height:11px;background:rgba(0,0,0,0.07);"></div>
<div class="a" style="left:317px;top:478px;width:0;height:22px;border-left:1px dotted #333;"></div>
<div class="a" style="left:903px;top:46px;width:1px;height:462px;background:#d4d4d4;"></div>
<div class="a" style="left:704px;top:46px;width:0;height:462px;border-left:1px dotted #222;"></div>
<div class="a" style="left:506px;top:54.0px;width:186.0px;height:28.5px;background:#8b8b8b;"></div>
<div class="a" style="left:506px;top:82.5px;width:186.0px;height:26px;background:#808080;"></div>
<div class="lab" id="lab0" style="top:73.5px;">Neutral</div>
<div class="a" style="left:506px;top:118.6px;width:25.0px;height:28.5px;background:#a3c463;"></div>
<div class="a" style="left:506px;top:147.1px;width:25.0px;height:26px;background:#99bb55;"></div>
<div class="lab" id="lab1" style="top:138.0px;">Happy</div>
<div class="a" style="left:506px;top:183.2px;width:3.5px;height:28.5px;background:#8b6fb0;"></div>
<div class="a" style="left:506px;top:211.7px;width:3.5px;height:26px;background:#7f62a6;"></div>
<div class="lab" id="lab2" style="top:202.5px;">Sad</div>
<div class="lab" id="lab3" style="top:267.0px;">Angry</div>
<div class="a" style="left:506px;top:312.4px;width:6.5px;height:28.5px;background:#ec9a50;"></div>
<div class="a" style="left:506px;top:340.9px;width:6.5px;height:26px;background:#e48a3c;"></div>
<div class="lab" id="lab4" style="top:331.5px;">Surprised</div>
<div class="lab" id="lab5" style="top:396.0px;">Scared</div>
<div class="lab" id="lab6" style="top:460.5px;">Disgusted</div>
<div class="t" id="tbE" style="left:258px;top:572.7px;font-size:17.6px;letter-spacing:-0.36px;color:#151515;">Expressions</div>
<div class="t" id="tbO" style="left:415.5px;top:572.7px;font-size:17.6px;letter-spacing:0.45px;color:#151515;">Options</div>
<div class="a" style="left:117px;top:565px;width:1px;height:31px;background:#b0b0b0;"></div>
<div class="a" style="left:233px;top:565px;width:1px;height:31px;background:#b0b0b0;"></div>
<div class="a" style="left:391px;top:565px;width:1px;height:31px;background:#b0b0b0;"></div>
<svg class="a" style="left:0;top:0;" width="1024" height="942" viewBox="0 0 1024 942" font-family="Liberation Sans, sans-serif">
<g fill="none" stroke="#222" stroke-width="1.6">
<rect x="27.300" y="573.300" width="11" height="5.800" fill="#8c8c8c" stroke="none"/>
<path d="M24.800 572.800h15.500l0.800 0.800v15.200h-16.300z"/><path d="M27.800 589v-5.300h9.500v5.300" stroke-width="1.400"/><rect x="31.300" y="585.600" width="2.200" height="2.200" fill="#222" stroke="none"/>
<path d="M81.200 587.300h-3.200v-15.500h8.500l2.500 2.500" stroke-width="1.500"/><path d="M81.500 574.500h8l5 5v10.500h-13z" fill="#f0f0f0"/><path d="M89.500 574.500v5h5" stroke-width="1.300"/>
<circle cx="145.600" cy="577.800" r="5.300" stroke-width="1.500"/><path d="M149.600 581.800l8.700 7.800" stroke-width="1.900"/><path d="M142.900 577.800h5.400" stroke-width="1.300"/>
<circle cx="199.500" cy="577.800" r="5.300" stroke-width="1.500"/><path d="M203.500 581.800l8.700 7.800" stroke-width="1.900"/><path d="M196.800 577.800h5.400M199.500 575.100v5.400" stroke-width="1.300"/>
</g>
<path d="M371.300 578.600h8.600l-4.300 4.600z" fill="#111"/><path d="M500.100 578.600h8.600l-4.300 4.600z" fill="#111"/>
<g stroke="#e3e3e3" stroke-width="1.2" fill="none">
<path d="M115.3 635.500V824"/>
<path d="M204.7 635.500V824"/>
<path d="M294.0 635.500V824"/>
<path d="M383.4 635.500V824"/>
<path d="M472.8 635.500V824"/>
<path d="M562.1 635.500V824"/>
<path d="M651.5 635.500V824"/>
<path d="M740.9 635.500V824"/>
<path d="M830.3 635.500V824"/>
<path d="M919.6 635.500V824"/>
<path d="M65 635.5H958"/>
<path d="M65 698.2H958"/>
<path d="M65 761.0H958"/>
</g>
<path d="M65.1 750.3 L70.1 748.3 L75.6 752.8 L82.6 760.8 L90.2 764.8 L96.4 761.5 L102.7 757.3 L108.9 755.3 L112.7 756.5 L117.7 754.0 L125.2 747.8 L132.7 743.2 L137.8 751.5 L144.0 759.8 L150.3 759.0 L157.8 754.8 L165.3 750.8 L170.3 752.3 L175.8 746.5 L180.8 744.7 L185.4 750.3 L191.6 759.0 L197.9 756.5 L202.9 758.5 L207.9 756.5 L214.2 762.3 L218.4 754.0 L222.9 755.3 L227.4 761.5 L232.9 757.8 L239.2 749.8 L245.5 750.3 L250.0 754.0 L255.0 756.5 L260.0 764.0 L267.5 776.6 L275.1 784.8 L282.6 789.8 L290.1 792.8 L295.1 792.3 L300.1 787.8 L310.1 789.1 L320.1 787.8 L330.2 787.8 L337.7 773.3 L345.2 780.3 L353.2 787.3 L357.7 777.8 L362.2 767.8 L370.2 774.1 L375.3 771.6 L380.8 765.3 L390.3 767.8 L397.8 770.3 L406.6 767.8 L415.3 769.0 L422.8 765.3 L435.4 759.0 L445.4 760.8 L455.4 763.5 L462.9 764.8 L470.4 762.3 L480.5 760.3 L488.0 757.3 L490.0 756.5 L496.3 749.0 L502.5 739.0 L508.8 735.7 L515.1 735.2 L521.3 734.0 L527.6 730.2 L531.3 728.2 L535.1 728.2 L540.1 735.7 L546.4 734.7 L552.6 735.2 L561.4 731.0 L570.2 730.7 L577.7 735.2 L585.2 738.2 L590.2 736.5 L597.7 735.7 L605.2 737.7 L614.0 740.2 L620.3 737.7 L627.8 735.7 L631.5 742.7 L636.5 747.8 L641.6 747.8 L647.8 743.5 L654.1 743.2 L659.1 740.7 L665.4 740.7 L670.4 739.0 L675.4 738.2 L679.1 739.7 L686.6 735.7 L692.9 734.7 L700.4 733.2 L707.9 734.7 L715.5 734.0 L724.2 733.2 L728.0 742.7 L730.0 745.3 L735.0 752.8 L740.0 764.0 L745.0 766.5 L751.3 772.8 L756.3 775.8 L762.6 757.3 L767.6 769.0 L770.6 773.3 L775.1 764.0 L780.1 745.3 L786.4 737.7 L792.6 732.7 L798.1 731.5 L802.6 740.2 L807.7 749.0 L813.9 750.8 L818.2 750.8 L823.9 741.5 L830.2 732.7 L836.5 732.2 L842.7 735.2 L850.2 730.2 L860.3 727.2 L870.3 727.7 L880.3 724.7 L890.3 722.7 L900.3 722.7 L907.9 729.7 L915.4 726.5 L922.9 725.7 L929.1 724.7 L936.7 716.4 L945.4 715.2 L952.9 713.9 L958.0 713.2" fill="none" stroke="#7f7f7f" stroke-width="2.9" stroke-linejoin="round" stroke-linecap="butt"/>
<path d="M65.1 814.1 L71.4 805.4 L77.6 807.9 L85.2 813.4 L93.9 817.9 L100.2 806.6 L106.4 796.6 L111.5 788.3 L117.7 786.6 L122.7 797.9 L129.0 806.6 L135.3 813.4 L141.5 817.9 L146.5 810.4 L152.8 812.9 L157.8 809.1 L162.8 801.6 L170.3 790.3 L175.3 796.6 L181.6 792.8 L186.6 777.8 L190.9 764.0 L196.6 784.1 L203.4 772.8 L209.1 787.8 L215.4 799.1 L219.9 804.1 L225.4 775.3 L230.4 765.3 L234.2 760.3 L240.5 775.8 L245.5 776.6 L250.0 770.3 L255.0 769.0 L260.0 760.3 L267.5 737.7 L275.1 715.2 L282.6 701.4 L290.1 693.9 L295.1 693.9 L298.8 699.7 L303.9 697.7 L310.1 694.4 L315.1 695.2 L321.4 697.2 L327.7 696.4 L332.2 698.2 L337.7 725.2 L345.2 712.2 L353.2 698.9 L357.7 720.2 L362.2 745.3 L366.5 737.7 L370.7 727.7 L375.3 731.5 L380.8 742.2 L386.5 739.7 L396.5 735.2 L401.6 737.2 L405.8 740.7 L410.3 737.7 L415.3 737.2 L420.3 742.7 L427.9 749.0 L436.6 757.3 L445.4 752.8 L454.2 747.3 L462.9 745.3 L469.2 749.0 L475.5 752.3 L481.7 752.3 L488.0 757.8 L490.0 757.8 L493.8 761.5 L497.5 772.8 L502.5 786.6 L510.0 796.6 L517.6 800.4 L525.1 806.6 L531.3 812.4 L538.8 812.4 L543.9 809.1 L548.9 807.9 L553.9 807.4 L558.9 812.9 L563.1 815.4 L570.2 812.4 L576.4 806.6 L582.7 804.1 L590.2 803.6 L595.2 806.6 L601.5 807.9 L607.7 807.4 L612.7 805.4 L620.3 810.4 L626.5 815.4 L631.5 817.9 L636.5 820.4 L640.3 812.9 L645.3 807.4 L650.3 811.6 L655.3 816.6 L661.6 811.6 L667.9 807.4 L674.1 807.4 L679.1 803.6 L684.1 806.6 L687.9 812.4 L695.4 814.1 L701.7 816.6 L707.9 812.9 L714.2 816.6 L720.5 819.9 L728.0 817.9 L730.0 819.1 L735.0 817.9 L740.0 819.1 L745.5 813.4 L751.3 817.9 L757.6 819.1 L765.1 820.4 L775.1 821.2 L783.9 819.1 L791.4 812.9 L797.6 802.9 L802.6 785.3 L806.4 771.6 L811.4 765.3 L815.2 762.8 L818.2 757.8 L822.7 770.3 L827.7 785.3 L832.7 792.8 L837.7 792.3 L842.7 790.8 L847.7 795.4 L852.7 801.6 L857.8 805.9 L864.0 807.4 L869.0 804.1 L874.0 803.4 L879.0 809.1 L886.6 814.1 L895.3 819.1 L901.6 817.9 L905.4 809.1 L907.9 805.4 L915.4 812.9 L921.6 807.4 L927.9 810.4 L935.4 816.6 L942.9 819.9 L950.4 821.2 L958.0 821.7" fill="none" stroke="#9bbb59" stroke-width="2.8" stroke-linejoin="round" stroke-linecap="butt"/>
<path d="M65.1 786.6 L69.6 790.3 L75.1 780.3 L82.6 764.0 L89.7 754.5 L93.9 755.3 L97.7 765.3 L103.9 785.3 L110.2 799.1 L116.5 804.1 L120.2 807.9 L124.0 805.4 L132.7 804.9 L137.8 785.3 L144.0 766.5 L149.0 765.8 L154.0 770.3 L160.3 785.3 L166.6 799.1 L172.8 806.6 L180.3 812.9 L187.9 817.9 L192.9 815.4 L196.6 805.4 L201.6 799.1 L206.6 801.6 L211.7 785.3 L214.9 777.3 L219.2 785.3 L225.4 799.1 L231.7 807.9 L236.7 812.9 L243.0 806.6 L248.0 803.4 L250.0 804.1 L255.0 800.9 L260.0 807.9 L265.0 814.1 L272.5 817.9 L282.6 820.4 L292.6 822.4 L312.6 823.4 L333.9 821.7 L336.4 818.4 L342.7 820.4 L352.7 821.7 L356.5 820.4 L359.5 810.9 L364.0 814.1 L370.2 819.1 L375.3 821.7 L400.3 823.4 L475.5 823.4 L515.1 823.4 L535.1 820.4 L537.6 810.4 L540.6 806.6 L546.4 812.9 L552.6 817.4 L560.1 819.9 L570.2 820.4 L576.4 814.1 L582.7 808.4 L588.9 806.6 L595.2 807.9 L601.5 804.1 L607.7 802.4 L615.3 799.1 L620.3 799.9 L626.5 802.9 L631.5 790.3 L637.0 782.3 L641.6 790.3 L646.6 799.1 L652.8 798.4 L657.8 805.4 L664.1 812.4 L670.4 816.6 L676.6 819.1 L682.9 820.9 L702.9 822.4 L723.0 821.9 L725.5 820.4 L728.0 805.4 L730.0 792.8 L733.8 775.3 L737.5 760.3 L741.3 749.0 L745.0 747.8 L750.0 734.0 L753.8 726.5 L756.3 725.2 L759.6 735.2 L762.6 750.3 L766.3 730.2 L770.1 721.5 L773.1 727.7 L776.3 745.3 L780.1 765.3 L785.1 785.3 L791.4 800.4 L798.9 811.6 L807.7 817.9 L815.2 820.4 L825.2 821.9 L855.3 823.4 L958.0 823.4" fill="none" stroke="#8064a2" stroke-width="2.8" stroke-linejoin="round" stroke-linecap="butt"/>
<path d="M65.1 817.9 L75.1 819.6 L85.2 820.4 L95.2 820.4 L110.2 821.7 L120.2 820.4 L126.5 814.9 L132.7 813.4 L142.8 814.9 L155.3 816.6 L170.3 818.4 L185.4 817.9 L195.4 817.9 L207.9 817.1 L217.9 819.1 L227.9 820.9 L238.0 820.4 L248.0 819.6 L250.0 820.4 L256.3 815.9 L263.8 814.1 L272.5 817.4 L282.6 820.4 L292.6 821.9 L325.2 822.9 L375.3 822.4 L390.3 821.2 L405.3 821.9 L450.4 822.9 L490.0 822.9 L565.2 823.4 L640.3 822.9 L665.4 821.9 L680.4 821.2 L702.9 821.9 L740.5 822.4 L740.0 822.4 L767.6 822.9 L792.6 821.2 L817.7 821.2 L842.7 822.4 L958.0 822.9" fill="none" stroke="#c0504d" stroke-width="2.6" stroke-linejoin="round" stroke-linecap="butt"/>
<path d="M65.1 823.4 L135.3 823.4 L160.3 821.7 L180.3 820.4 L195.4 821.7 L210.4 822.4 L227.9 821.2 L240.5 820.4 L248.0 821.9 L250.0 822.4 L275.1 822.9 L300.1 821.9 L325.2 822.9 L365.2 822.9 L370.2 821.7 L380.3 819.1 L392.8 817.9 L405.3 819.4 L425.4 819.9 L445.4 821.2 L465.4 819.9 L480.5 820.4 L488.0 820.9 L490.0 820.4 L505.0 822.4 L540.1 823.4 L640.3 823.4 L660.3 820.9 L670.4 819.6 L690.4 820.4 L715.5 821.7 L728.0 821.7 L730.0 821.9 L755.1 822.4 L780.1 821.2 L787.6 819.1 L793.1 817.1 L798.9 819.1 L805.2 820.4 L815.2 821.2 L855.3 821.7 L860.3 819.9 L880.3 820.4 L900.3 820.4 L915.4 821.7 L925.4 820.4 L942.9 820.4 L958.0 821.2" fill="none" stroke="#e8883a" stroke-width="2.8" stroke-linejoin="round" stroke-linecap="butt"/>
<path d="M65.1 822.4 L85.2 821.7 L110.2 823.4 L248.0 823.9 L250.0 823.9 L300.1 823.9 L325.2 822.4 L350.2 823.4 L488.0 823.9 L490.0 823.9 L505.0 823.4 L520.1 822.4 L540.1 822.9 L565.2 823.4 L590.2 821.9 L610.2 823.4 L728.0 823.9 L730.0 823.9 L780.1 823.4 L790.1 821.9 L800.1 823.4 L958.0 823.9" fill="none" stroke="#4bacc6" stroke-width="2.4" stroke-linejoin="round" stroke-linecap="butt"/>
<path d="M65.1 824.9 L248.0 824.9 L250.0 824.9 L300.1 824.4 L325.2 822.9 L350.2 824.4 L488.0 824.9 L490.0 824.9 L505.0 823.4 L520.1 820.9 L535.1 821.7 L552.6 822.9 L570.2 822.9 L580.2 818.4 L591.5 814.9 L600.2 819.1 L610.2 822.4 L630.3 823.4 L645.3 821.2 L660.3 822.4 L680.4 824.4 L728.0 824.9 L730.0 824.9 L958.0 824.9" fill="none" stroke="#3f6fb0" stroke-width="3.4" stroke-linejoin="round" stroke-linecap="butt"/>
<path d="M65.300 635V825.500" stroke="#111" stroke-width="1.500"/>
<path d="M59 635.5H65.500" stroke="#111" stroke-width="1.300"/>
<path d="M59 698.2H65.500" stroke="#111" stroke-width="1.300"/>
<path d="M59 761.0H65.500" stroke="#111" stroke-width="1.300"/>
<path d="M59 824.0H65.500" stroke="#111" stroke-width="1.300"/>
<path d="M115.3 826.500V832" stroke="#111" stroke-width="1.300"/>
<path d="M204.7 826.500V832" stroke="#111" stroke-width="1.300"/>
<path d="M294.0 826.500V832" stroke="#111" stroke-width="1.300"/>
<path d="M383.4 826.500V832" stroke="#111" stroke-width="1.300"/>
<path d="M472.8 826.500V832" stroke="#111" stroke-width="1.300"/>
<path d="M562.1 826.500V832" stroke="#111" stroke-width="1.300"/>
<path d="M651.5 826.500V832" stroke="#111" stroke-width="1.300"/>
<path d="M740.9 826.500V832" stroke="#111" stroke-width="1.300"/>
<path d="M830.3 826.500V832" stroke="#111" stroke-width="1.300"/>
<path d="M919.6 826.500V832" stroke="#111" stroke-width="1.300"/>
<path d="M688.300 635V821" stroke="#111" stroke-width="1.400"/>
<text x="54.800" y="640.5" font-size="14.200" text-anchor="end" fill="#3c3c3c" textLength="19" lengthAdjust="spacingAndGlyphs">1.0</text>
<text x="54.800" y="703.2" font-size="14.200" text-anchor="end" fill="#3c3c3c" textLength="19" lengthAdjust="spacingAndGlyphs">0.7</text>
<text x="54.800" y="766.0" font-size="14.200" text-anchor="end" fill="#3c3c3c" textLength="19" lengthAdjust="spacingAndGlyphs">0.3</text>
<text x="54.800" y="829.0" font-size="14.200" text-anchor="end" fill="#3c3c3c" textLength="19" lengthAdjust="spacingAndGlyphs">0.0</text>
<text x="113.6" y="848.700" font-size="14.300" text-anchor="middle" fill="#3c3c3c" textLength="51" lengthAdjust="spacingAndGlyphs">20:42.00</text>
<text x="203.0" y="848.700" font-size="14.300" text-anchor="middle" fill="#3c3c3c" textLength="51" lengthAdjust="spacingAndGlyphs">20:44.00</text>
<text x="292.3" y="848.700" font-size="14.300" text-anchor="middle" fill="#3c3c3c" textLength="51" lengthAdjust="spacingAndGlyphs">20:46.00</text>
<text x="381.7" y="848.700" font-size="14.300" text-anchor="middle" fill="#3c3c3c" textLength="51" lengthAdjust="spacingAndGlyphs">20:48.00</text>
<text x="471.1" y="848.700" font-size="14.300" text-anchor="middle" fill="#3c3c3c" textLength="51" lengthAdjust="spacingAndGlyphs">20:50.00</text>
<text x="560.4" y="848.700" font-size="14.300" text-anchor="middle" fill="#3c3c3c" textLength="51" lengthAdjust="spacingAndGlyphs">20:52.00</text>
<text x="649.8" y="848.700" font-size="14.300" text-anchor="middle" fill="#3c3c3c" textLength="51" lengthAdjust="spacingAndGlyphs">20:54.00</text>
<text x="739.2" y="848.700" font-size="14.300" text-anchor="middle" fill="#3c3c3c" textLength="51" lengthAdjust="spacingAndGlyphs">20:56.00</text>
<text x="828.6" y="848.700" font-size="14.300" text-anchor="middle" fill="#3c3c3c" textLength="51" lengthAdjust="spacingAndGlyphs">20:58.00</text>
<text x="917.9" y="848.700" font-size="14.300" text-anchor="middle" fill="#3c3c3c" textLength="51" lengthAdjust="spacingAndGlyphs">21:00.00</text>
<path d="M65 865.200H958" stroke="#111" stroke-width="1.300"/>
<circle cx="725" cy="865.200" r="7.400" fill="#fff" stroke="#111" stroke-width="1.400"/>
<rect x="65.0" y="887.3" width="16" height="16" fill="#7f7f7f"/>
<text x="89.8" y="901.0" font-size="14.500" fill="#2a2a2a" letter-spacing="0.3">Neutral</text>
<rect x="65.0" y="910.5" width="16" height="16" fill="#9bbb59"/>
<text x="89.8" y="924.2" font-size="14.500" fill="#2a2a2a" letter-spacing="0.3">Happy</text>
<rect x="159.3" y="887.3" width="16" height="16" fill="#8064a2"/>
<text x="184.1" y="901.0" font-size="14.500" fill="#2a2a2a" letter-spacing="0.3">Sad</text>
<rect x="159.3" y="910.5" width="16" height="16" fill="#c0504d"/>
<text x="184.1" y="924.2" font-size="14.500" fill="#2a2a2a" letter-spacing="0.3">Angry</text>
<rect x="244.0" y="887.3" width="16" height="16" fill="#e8883a"/>
<text x="268.8" y="901.0" font-size="14.500" fill="#2a2a2a" letter-spacing="0.3">Surprised</text>
<rect x="244.0" y="910.5" width="16" height="16" fill="#3aa0b8"/>
<text x="268.8" y="924.2" font-size="14.500" fill="#2a2a2a" letter-spacing="0.3">Scared</text>
<rect x="352.3" y="887.3" width="16" height="16" fill="#3f6fb0"/>
<text x="377.1" y="901.0" font-size="14.500" fill="#2a2a2a" letter-spacing="0.3">Disgusted</text>
</svg>
</body></html>
